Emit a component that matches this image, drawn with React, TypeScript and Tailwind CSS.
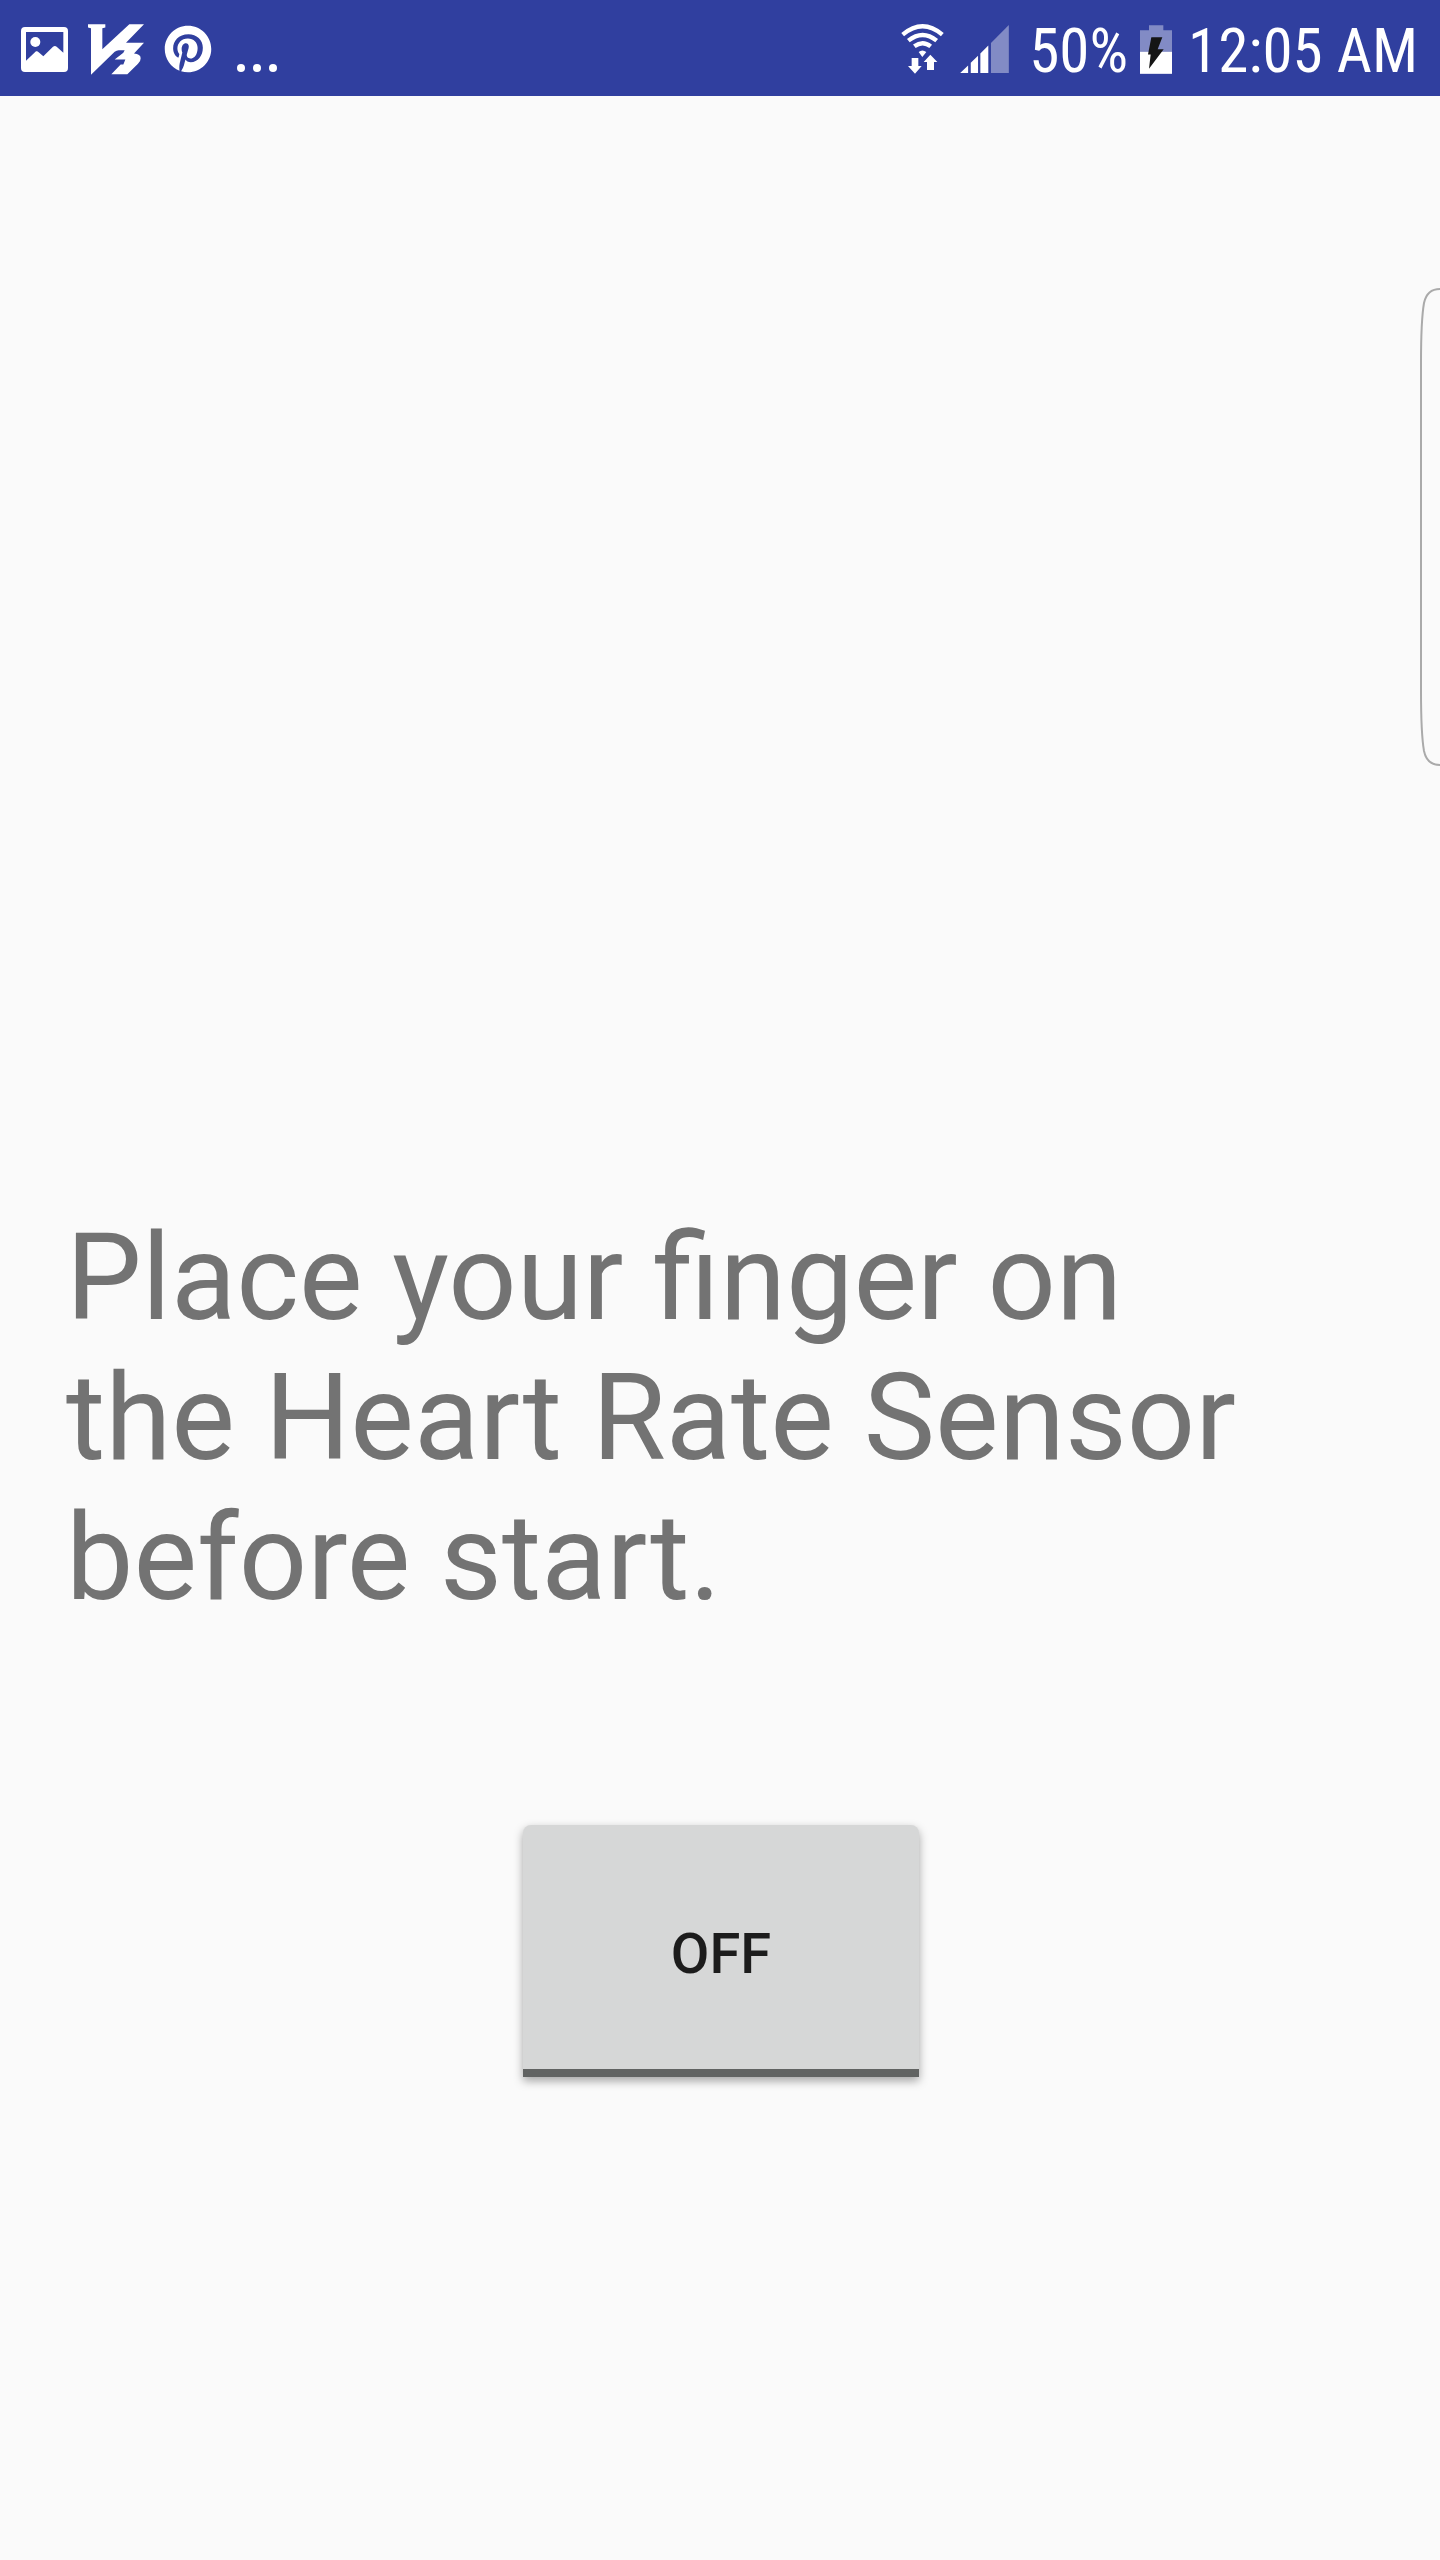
import { useState } from "react";
import { FaPinterest } from "react-icons/fa";

function PictureIcon() {
  return (
    <svg viewBox="0 0 141 135" className="h-[45px] w-[47px]" aria-hidden="true">
      <path
        fill="white"
        fillRule="evenodd"
        d="M12 0H129Q141 0 141 12V123Q141 135 129 135H12Q0 135 0 123V12Q0 0 12 0ZM15 15V101L45 73Q49 71 53 76L67 88L96 59Q102 55 107 59L127 77V15Z"
      />
      <circle cx="43" cy="45" r="15" fill="white" />
    </svg>
  );
}

function V3Icon() {
  return (
    <svg viewBox="0 0 168 152" className="h-[51px] w-14" aria-hidden="true">
      <path
        fill="white"
        d="M0 0H52V10L43 12V75L124 0H168L114 56H168L138 88Q158 90 158 102Q158 112 150 119L118 150H70L98 121H106L112 106H80L106 86L110 78H92Q86 78 80 83L9 152V12L0 10Z"
      />
    </svg>
  );
}

function WifiIcon() {
  return (
    <svg viewBox="0 0 129 150" className="h-[50px] w-[43px]" aria-hidden="true">
      <g fill="none" stroke="white" strokeWidth="13">
        <path d="M5 32Q65 -18 124 32" />
        <path d="M22 50Q65 16 107 50" />
        <path d="M40 67Q65 48 89 67" />
      </g>
      <path
        fill="white"
        d="M53 84Q64 75 76 84L64 99ZM32 102H52V126H62L42 149L21 126H32ZM88 92L109 114H99V138H78V114H68Z"
      />
    </svg>
  );
}

function SignalIcon() {
  return (
    <svg viewBox="0 0 147 145" className="h-12 w-[49px]" aria-hidden="true">
      <path fill="white" d="M0 145L24 122V145ZM32 114L54 93V145H32ZM61 86L85 62V145H61Z" />
      <path fill="white" fillOpacity="0.4" d="M93 54L147 0V145H93Z" />
    </svg>
  );
}

function BatteryIcon() {
  return (
    <svg viewBox="0 0 96 146" className="h-[49px] w-8" aria-hidden="true">
      <path fill="white" fillOpacity="0.4" d="M27 0H70V15H96V81H0V15H27Z" />
      <path fill="white" d="M0 80H96V146H0Z" />
      <path fill="#151515" d="M34 36H67L53 72H71L27 131L32 88H24Z" />
    </svg>
  );
}

function StatusBar() {
  return (
    <header className="flex h-24 items-center justify-between bg-[#303f9f] pt-0.5 pr-[22px] pl-[21px] text-white">
      <div className="flex items-center gap-5">
        <PictureIcon />
        <V3Icon />
        <FaPinterest className="size-12" aria-hidden="true" />
        <svg viewBox="0 0 40 48" className="ml-[5px] h-12 w-10" fill="white" aria-hidden="true">
          <circle cx="4" cy="43" r="4" />
          <circle cx="20" cy="43" r="4" />
          <circle cx="36" cy="43" r="4" />
        </svg>
      </div>
      <div className="flex items-center gap-4 font-['Roboto_Condensed','Roboto',sans-serif] text-[61px] leading-none">
        <WifiIcon />
        <SignalIcon />
        <span className="-mr-1 ml-1 pt-1">50%</span>
        <BatteryIcon />
        <time className="pt-1">12:05 AM</time>
      </div>
    </header>
  );
}

function EdgePanelHandle() {
  return (
    <svg
      viewBox="0 0 20 478"
      className="absolute top-72 right-0 h-[478px] w-5"
      fill="none"
      stroke="#aaaaaa"
      strokeWidth="2"
      aria-hidden="true"
    >
      <path d="M20 1Q7 1 4 15Q1 32 1 75V403Q1 446 4 463Q7 477 20 477" />
    </svg>
  );
}

export default function App() {
  const [on, setOn] = useState(false);
  return (
    <div className="relative flex min-h-screen flex-col bg-[#fafafa] font-['Roboto',sans-serif]">
      <StatusBar />
      <EdgePanelHandle />
      <main className="flex flex-1 flex-col pt-[1112px] pr-16 pl-[66px]">
        <p className="max-w-[1200px] text-[120px] leading-[140px] text-[#737373]">
          Place your finger on the Heart Rate Sensor before start.
        </p>
        <button
          type="button"
          aria-pressed={on}
          onClick={() => setOn(!on)}
          className="mt-[197px] flex h-[252px] w-[396px] flex-col self-center overflow-hidden rounded-t-lg bg-[#d6d7d7] text-[56px] font-medium text-[#1c1c1c] shadow-[0_4px_10px_rgba(0,0,0,0.35)]"
        >
          <span className="flex w-full flex-1 items-center justify-center pt-3.5">{on ? "ON" : "OFF"}</span>
          <span className="h-2 w-full bg-[#616362]" />
        </button>
      </main>
    </div>
  );
}
